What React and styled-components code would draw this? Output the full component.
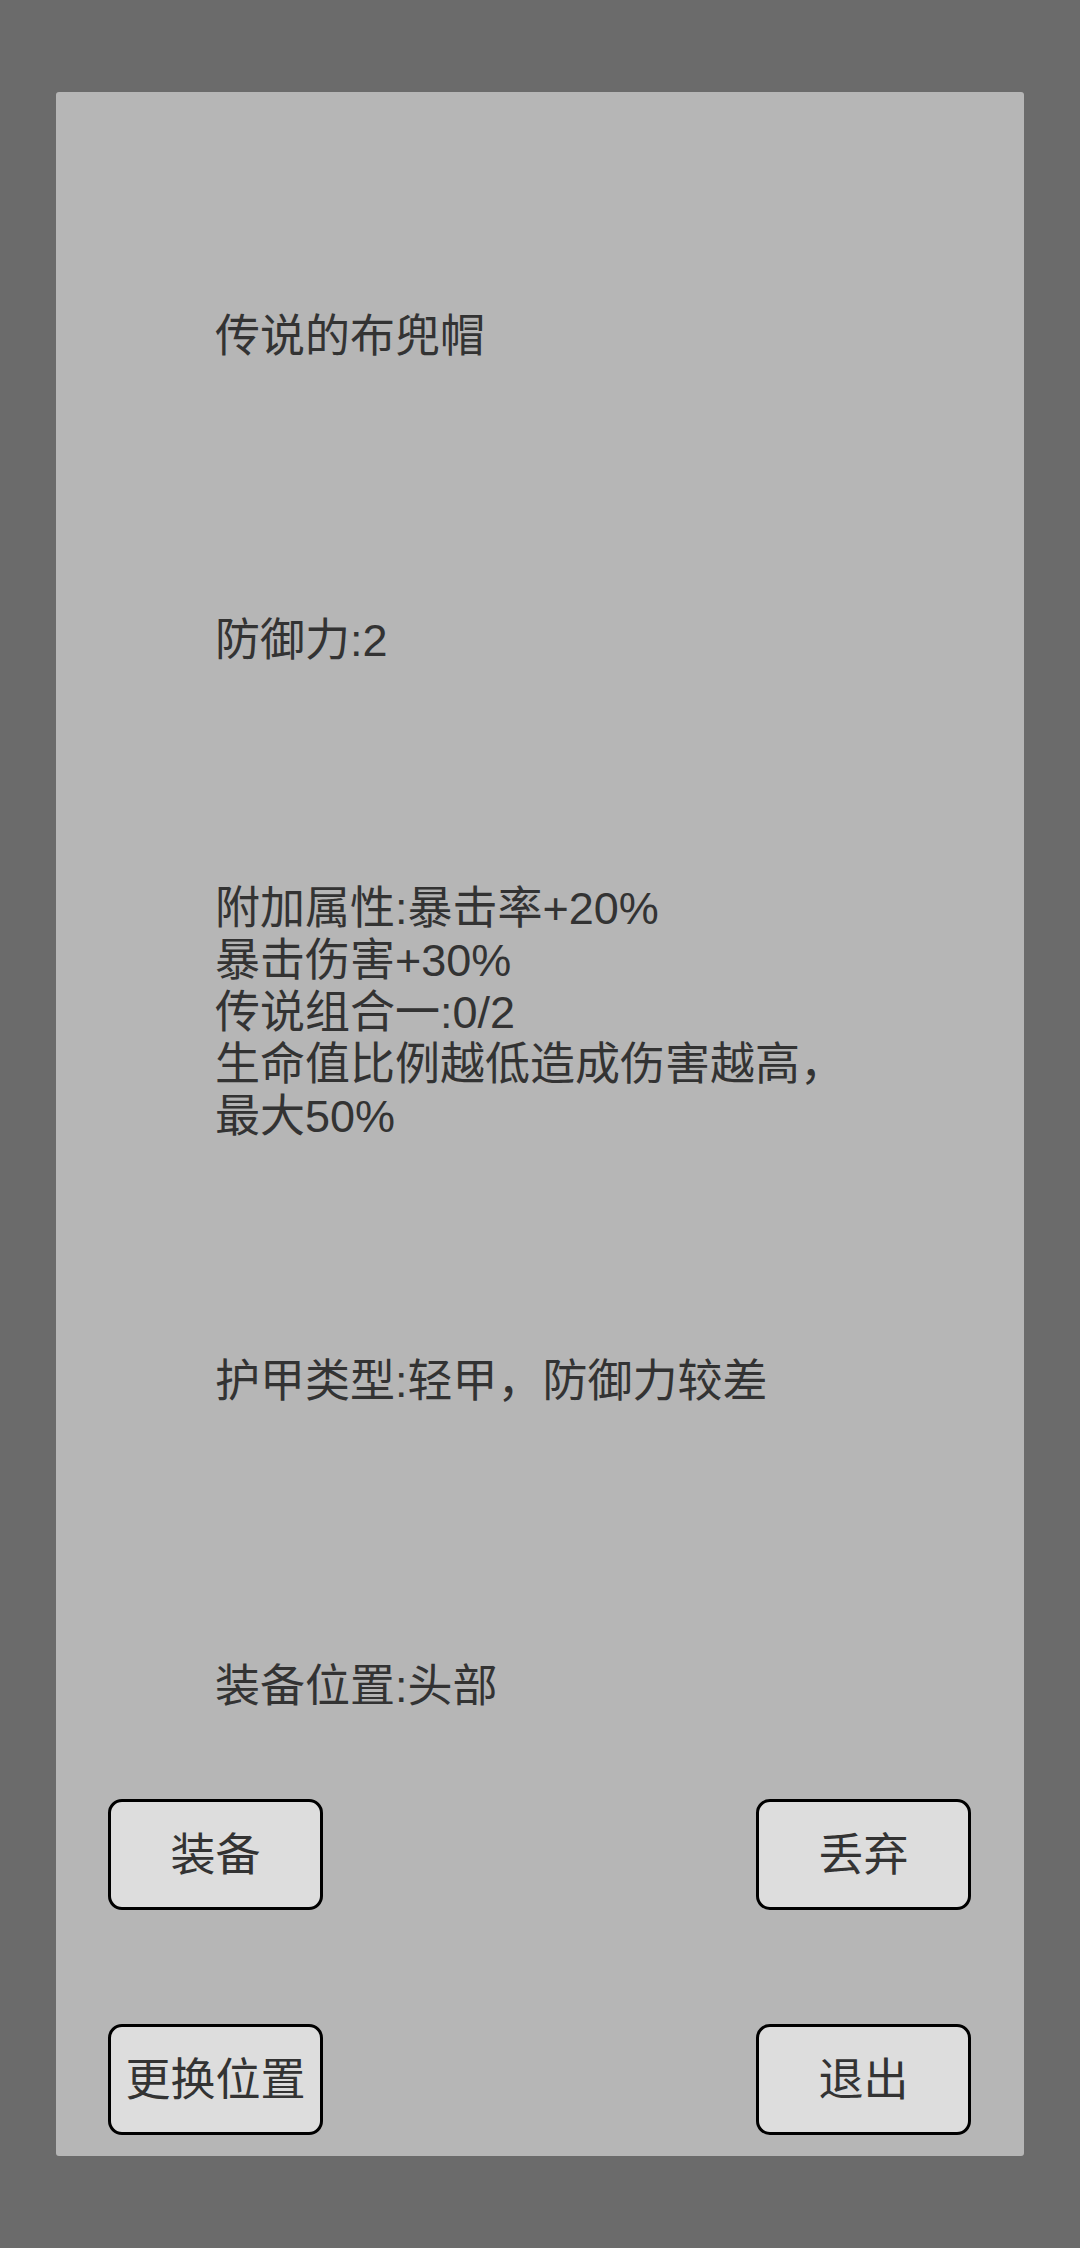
import React from "react";
import styled, { createGlobalStyle } from "styled-components";

const Global = createGlobalStyle`
  html, body {
    margin: 0;
    padding: 0;
    background: #6b6b6b;
  }
  body {
    font-family: "Liberation Sans", "Noto Sans CJK SC", sans-serif;
  }
`;

const Screen = styled.div`
  width: 1080px;
  height: 2248px;
  box-sizing: border-box;
  padding: 92px 56px 0 56px;
  background: #6b6b6b;
`;

const Panel = styled.div`
  height: 2064px;
  box-sizing: border-box;
  background: #b6b6b6;
  border-radius: 3px;
  padding: 219px 53px 0 52px;
  display: flex;
  flex-direction: column;
`;

const Info = styled.div`
  display: flex;
  flex-direction: column;
  padding-left: 107px;
  color: #333333;
  font-size: 45px;
  line-height: 52px;
`;

const Line = styled.div`
  margin-top: ${(p) => p.$gap || 0}px;
  white-space: pre-line;
`;

const Buttons = styled.div`
  margin-top: 86px;
  display: grid;
  grid-template-columns: 215px 215px;
  justify-content: space-between;
  row-gap: 114px;
`;

const Button = styled.button`
  height: 111px;
  box-sizing: border-box;
  background: #dddddd;
  border: 3px solid #000;
  border-radius: 14px;
  color: #333333;
  font-family: "Liberation Sans", "Noto Sans CJK SC", sans-serif;
  font-size: 45px;
  padding: 0 0 6px 0;
  display: flex;
  align-items: center;
  justify-content: center;
`;

export default function App() {
  return (
    <>
      <Global />
      <Screen>
        <Panel>
          <Info>
            <Line>传说的布兜帽</Line>
            <Line $gap={252}>防御力:2</Line>
            <Line $gap={216}>
              {"附加属性:暴击率+20%\n暴击伤害+30%\n传说组合一:0/2\n生命值比例越低造成伤害越高，\n最大50%"}
            </Line>
            <Line $gap={213}>护甲类型:轻甲，防御力较差</Line>
            <Line $gap={253}>装备位置:头部</Line>
          </Info>
          <Buttons>
            <Button>装备</Button>
            <Button>丢弃</Button>
            <Button>更换位置</Button>
            <Button>退出</Button>
          </Buttons>
        </Panel>
      </Screen>
    </>
  );
}
